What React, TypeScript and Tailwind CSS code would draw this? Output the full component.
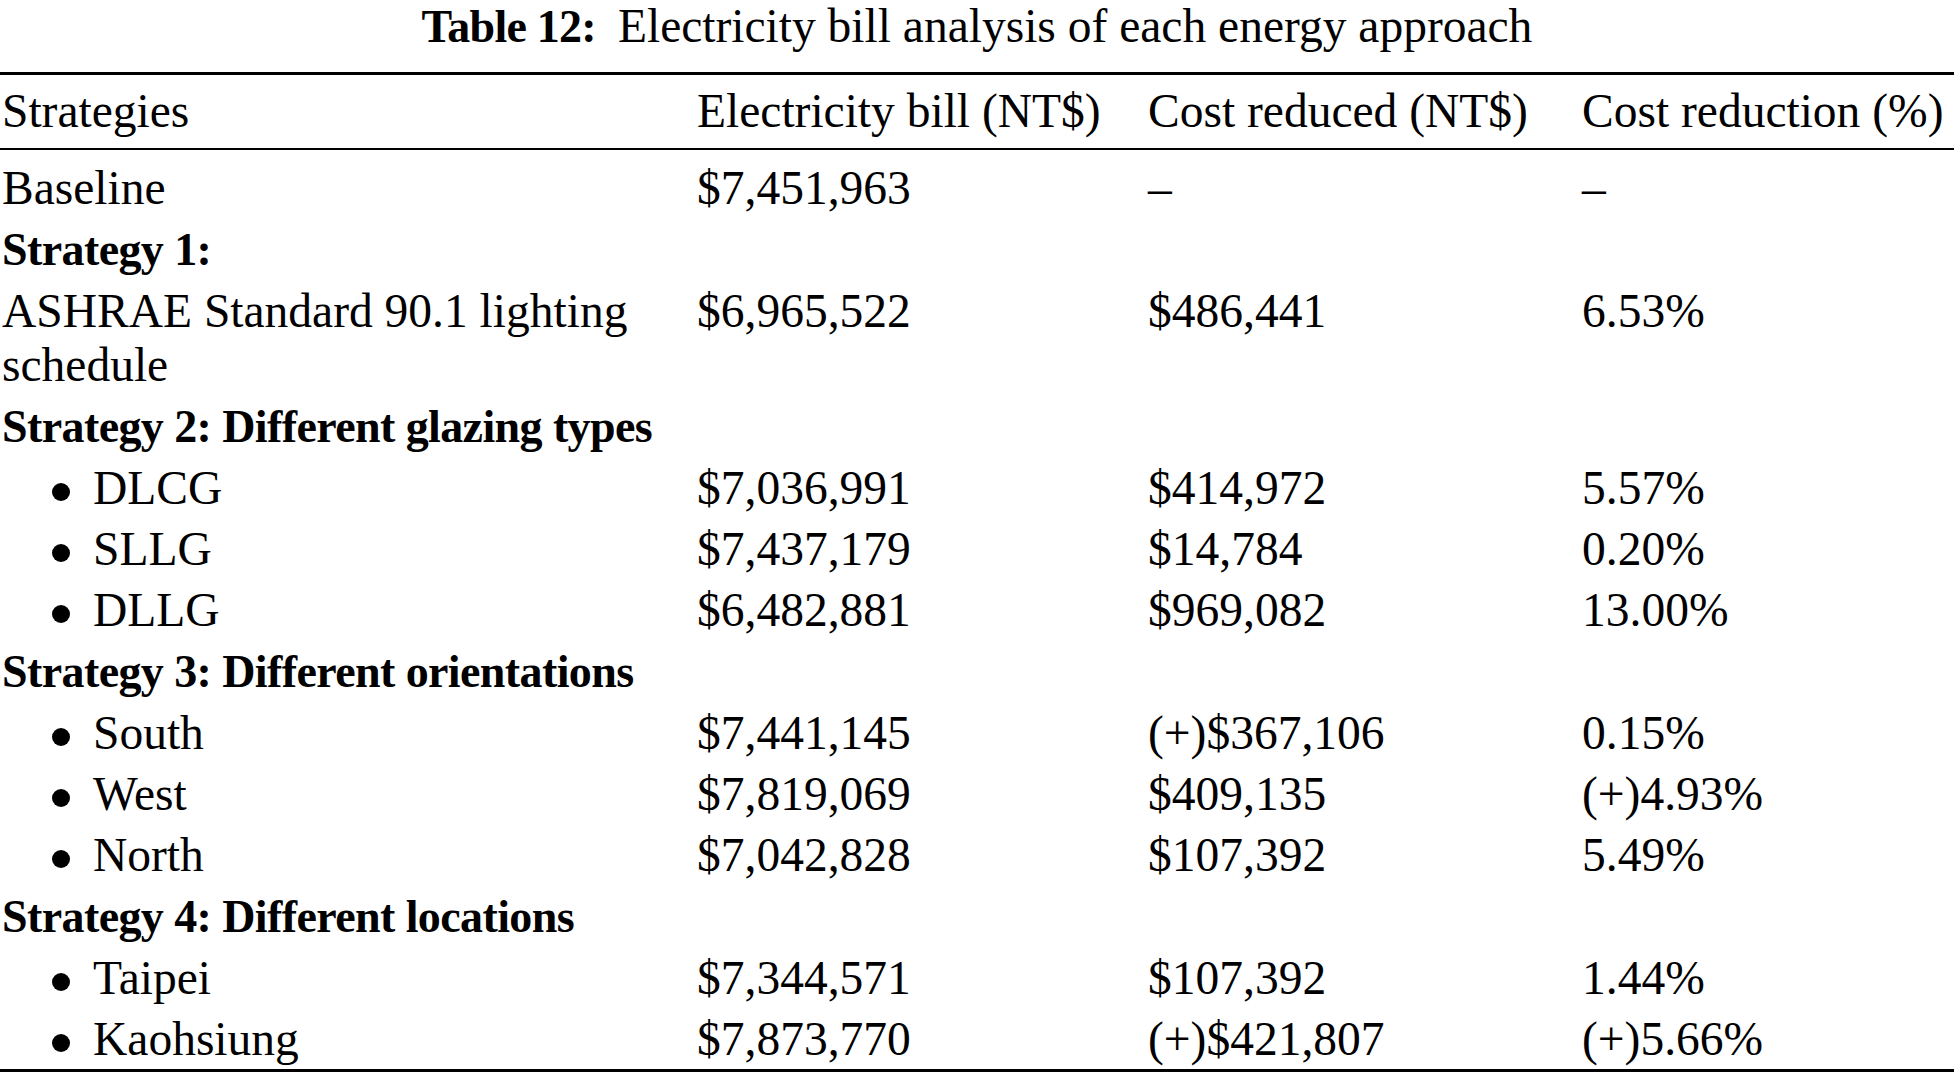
import React from "react";

type Row =
  | { kind: "head"; text: string }
  | { kind: "data"; label: string; bullet?: boolean; c2: string; c3: string; c4: string };

const rows: Row[] = [
  { kind: "data", label: "Baseline", c2: "$7,451,963", c3: "–", c4: "–" },
  { kind: "head", text: "Strategy 1:" },
  { kind: "data", label: "ASHRAE Standard 90.1 lighting schedule", c2: "$6,965,522", c3: "$486,441", c4: "6.53%" },
  { kind: "head", text: "Strategy 2: Different glazing types" },
  { kind: "data", bullet: true, label: "DLCG", c2: "$7,036,991", c3: "$414,972", c4: "5.57%" },
  { kind: "data", bullet: true, label: "SLLG", c2: "$7,437,179", c3: "$14,784", c4: "0.20%" },
  { kind: "data", bullet: true, label: "DLLG", c2: "$6,482,881", c3: "$969,082", c4: "13.00%" },
  { kind: "head", text: "Strategy 3: Different orientations" },
  { kind: "data", bullet: true, label: "South", c2: "$7,441,145", c3: "(+)$367,106", c4: "0.15%" },
  { kind: "data", bullet: true, label: "West", c2: "$7,819,069", c3: "$409,135", c4: "(+)4.93%" },
  { kind: "data", bullet: true, label: "North", c2: "$7,042,828", c3: "$107,392", c4: "5.49%" },
  { kind: "head", text: "Strategy 4: Different locations" },
  { kind: "data", bullet: true, label: "Taipei", c2: "$7,344,571", c3: "$107,392", c4: "1.44%" },
  { kind: "data", bullet: true, label: "Kaohsiung", c2: "$7,873,770", c3: "(+)$421,807", c4: "(+)5.66%" },
];

const grid = "grid grid-cols-[697px_451px_434px_1fr]";

export default function App() {
  return (
    <div
      className="w-[1954px] h-[1079px] bg-white text-black text-[47.5px] overflow-hidden"
      style={{ fontFamily: '"Liberation Serif", "Times New Roman", serif' }}
    >
      <div className="h-[53px] leading-[53px] text-center whitespace-nowrap">
        <span className="font-bold text-[46px] tracking-[-0.75px] mr-[22px]">Table 12:</span>
        <span>Electricity bill analysis of each energy approach</span>
      </div>

      <div className="mt-[19px] h-[3px] bg-black" />

      <div className={`${grid} leading-[54px] pt-[9px] pb-[10px] whitespace-nowrap`}>
        <div className="pl-[2px]">Strategies</div>
        <div>Electricity bill (NT$)</div>
        <div>Cost reduced (NT$)</div>
        <div>Cost reduction (%)</div>
      </div>

      <div className="h-[2px] bg-black" />

      <div className="pt-[7px]">
        {rows.map((r, i) =>
          r.kind === "head" ? (
            <div key={i} className="py-[3.5px] leading-[54px] pl-[2px] whitespace-nowrap">
              <span className="font-bold text-[46px] tracking-[-0.6px]">{r.text}</span>
            </div>
          ) : (
            <div key={i} className={`${grid} py-[3.5px] leading-[54px]`}>
              <div className="pl-[2px] pr-[40px]">
                {r.bullet ? (
                  <span className="whitespace-nowrap">
                    <span className="inline-block w-[18px] h-[18px] rounded-full bg-black ml-[50px] mr-[23px] align-[3px]" />
                    {r.label}
                  </span>
                ) : (
                  r.label
                )}
              </div>
              <div className="whitespace-nowrap">{r.c2}</div>
              <div className="whitespace-nowrap">{r.c3}</div>
              <div className="whitespace-nowrap">{r.c4}</div>
            </div>
          )
        )}
      </div>

      <div className="h-[3px] bg-black" />
    </div>
  );
}
